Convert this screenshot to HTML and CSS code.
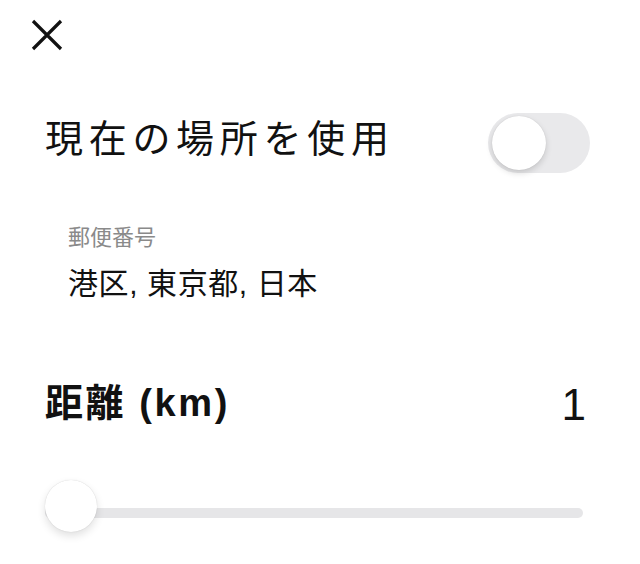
FILE: index.html
```html
<!DOCTYPE html>
<html lang="ja">
<head>
<meta charset="utf-8">
<link rel="stylesheet" href="styles.css">
</head>
<body>
<div class="screen">
  <div class="header">
    <button class="close" aria-label="閉じる">
      <svg width="32" height="32" viewBox="0 0 32 32"><path d="M2 2 L30 30 M30 2 L2 30" stroke="#111" stroke-width="3.2" fill="none"/></svg>
    </button>
  </div>
  <div class="row location">
    <span class="title">現在の場所を使用</span>
    <span class="toggle"><span class="knob"></span></span>
  </div>
  <div class="postal">
    <div class="label">郵便番号</div>
    <div class="address">港区, 東京都, 日本</div>
  </div>
  <div class="row distance">
    <span class="dist-title">距離 (km)</span>
    <span class="dist-value">1</span>
  </div>
  <div class="slider">
    <div class="track"></div>
    <div class="thumb"></div>
  </div>
</div>
</body>
</html>
```
FILE: styles.css
```css
html, body {
  margin: 0;
  padding: 0;
  background: #fff;
}
body {
  font-family: "Liberation Sans", "Noto Sans CJK JP", sans-serif;
  color: #111;
}
.screen {
  width: 640px;
  height: 564px;
  padding: 0 50px 0 45px;
  box-sizing: border-box;
}
.header {
  height: 70px;
  display: flex;
  align-items: flex-start;
  padding-top: 19px;
  box-sizing: border-box;
}
.close {
  border: 0;
  background: none;
  padding: 0;
  margin-left: -14px;
  width: 32px;
  height: 32px;
  display: block;
}
.row {
  display: flex;
  align-items: center;
  justify-content: space-between;
}
.location {
  height: 61px;
  margin-top: 42px;
}
.title {
  font-family: "Noto Sans CJK JP", sans-serif;
  font-size: 38px;
  font-weight: 400;
  letter-spacing: 5.7px;
  line-height: 40px;
  margin-bottom: 14px;
}
.toggle {
  width: 102px;
  height: 60px;
  border-radius: 30px;
  background: #e9e9eb;
  display: flex;
  align-items: center;
  padding: 0 4px;
  box-sizing: border-box;
}
.knob {
  width: 54px;
  height: 54px;
  border-radius: 50%;
  background: #fff;
  box-shadow: 0 3px 6px rgba(0,0,0,0.15), 0 0 1px rgba(0,0,0,0.15);
}
.postal {
  padding-left: 23px;
  margin-top: 47px;
}
.label {
  font-family: "Noto Sans CJK JP", sans-serif;
  font-size: 22px;
  color: #8a8a8a;
  line-height: 30px;
}
.address {
  font-family: "Liberation Sans", "Noto Sans CJK JP", sans-serif;
  font-size: 30px;
  letter-spacing: 0.6px;
  line-height: 40px;
  margin-top: 14px;
}
.distance {
  margin-top: 70px;
  height: 50px;
  padding-right: 4px;
}
.dist-title {
  font-family: "Liberation Sans", "Noto Sans CJK JP", sans-serif;
  font-size: 38px;
  font-weight: 700;
  letter-spacing: 2.6px;
}
.dist-value {
  font-family: "Liberation Sans", sans-serif;
  font-size: 44px;
  line-height: 50px;
  margin-top: 12px;
}
.slider {
  position: relative;
  margin-top: 56px;
  margin-right: 7px;
  height: 52px;
  display: flex;
  align-items: center;
}
.track {
  flex: 1;
  height: 10px;
  border-radius: 5px;
  background: #e6e6e8;
  margin-top: 14px;
}
.thumb {
  position: absolute;
  left: 0;
  top: 0;
  width: 52px;
  height: 52px;
  border-radius: 50%;
  background: #fff;
  box-shadow: 0 4px 8px rgba(0,0,0,0.12), 0 0 1px rgba(0,0,0,0.2);
}
```
